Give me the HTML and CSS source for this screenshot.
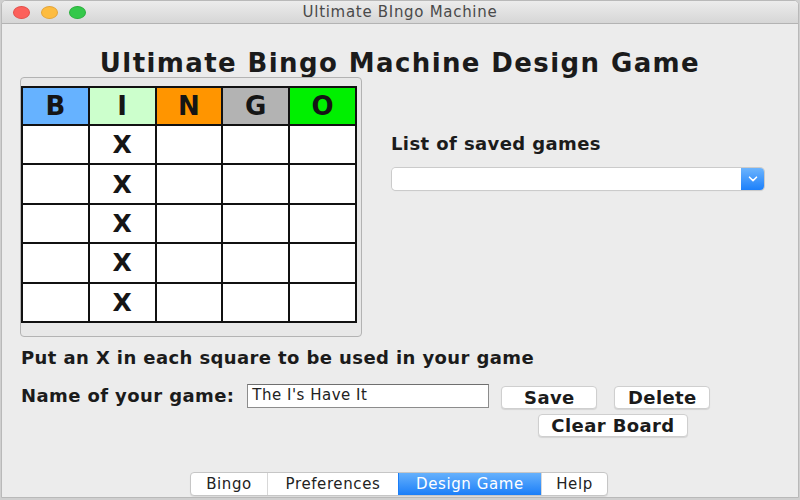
FILE: index.html
```html
<!DOCTYPE html>
<html>
<head>
<meta charset="utf-8">
<link rel="stylesheet" href="styles.css">
</head>
<body>
<div class="window">
  <div class="titlebar">
    <div class="lights">
      <span class="light red"></span>
      <span class="light yellow"></span>
      <span class="light green"></span>
    </div>
    <div class="title">Ultimate BIngo Machine</div>
  </div>
  <div class="content">
    <h1 class="heading">Ultimate Bingo Machine Design Game</h1>
    <div class="main">
      <div class="panel">
        <div class="board">
          <div class="hd b">B</div>
          <div class="hd i">I</div>
          <div class="hd n">N</div>
          <div class="hd g">G</div>
          <div class="hd o">O</div>
          <div class="cell"></div><div class="cell">X</div><div class="cell"></div><div class="cell"></div><div class="cell"></div>
          <div class="cell"></div><div class="cell">X</div><div class="cell"></div><div class="cell"></div><div class="cell"></div>
          <div class="cell"></div><div class="cell">X</div><div class="cell"></div><div class="cell"></div><div class="cell"></div>
          <div class="cell"></div><div class="cell">X</div><div class="cell"></div><div class="cell"></div><div class="cell"></div>
          <div class="cell"></div><div class="cell">X</div><div class="cell"></div><div class="cell"></div><div class="cell"></div>
        </div>
      </div>
      <div class="side">
        <div class="label">List of saved games</div>
        <div class="select">
          <div class="select-field"></div>
          <div class="select-btn">
            <svg width="10" height="6" viewBox="0 0 10 6"><path d="M1.5 1.2 L5 4.6 L8.5 1.2" fill="none" stroke="#fff" stroke-width="1.6" stroke-linecap="round" stroke-linejoin="round"/></svg>
          </div>
        </div>
      </div>
    </div>
    <div class="label instr">Put an X in each square to be used in your game</div>
    <div class="name-row">
      <div class="label">Name of your game:</div>
      <div class="field">The I's Have It</div>
      <div class="btn save">Save</div>
      <div class="btn delete">Delete</div>
    </div>
    <div class="clear-row">
      <div class="btn clear">Clear Board</div>
    </div>
    <div class="tabs-row">
      <div class="tabs">
        <div class="tab t-bingo">Bingo</div>
        <div class="tab t-pref">Preferences</div>
        <div class="tab t-design active">Design Game</div>
        <div class="tab t-help">Help</div>
      </div>
    </div>
  </div>
</div>
</body>
</html>
```
FILE: styles.css
```css
* { box-sizing: border-box; }
html, body {
  margin: 0;
  padding: 0;
  background: #cfcfcf;
  font-family: "DejaVu Sans", "Liberation Sans", sans-serif;
  color: #1a1a1a;
}
.window {
  width: 798px;
  height: 498px;
  margin-left: 1px;
  background: #ececec;
  border: 1px solid #b9b9b9;
  border-radius: 5px 5px 0 0;
  overflow: hidden;
}
.titlebar {
  height: 23px;
  background: linear-gradient(#ececec, #d6d6d6);
  border-bottom: 1px solid #b3b3b3;
  display: flex;
  align-items: center;
  position: relative;
}
.lights {
  display: flex;
  gap: 11px;
  padding-left: 11px;
}
.light {
  width: 17px;
  height: 13px;
  border-radius: 50%;
  display: block;
}
.red { background: #fc605b; border: 1px solid #e2504b; }
.yellow { background: #fdbc40; border: 1px solid #e3a53a; }
.green { background: #34c84a; border: 1px solid #2bb03d; }
.title {
  position: absolute;
  left: 0;
  right: 0;
  text-align: center;
  font-size: 15px;
  letter-spacing: 0.7px;
  color: #4a4a4a;
  pointer-events: none;
}
.heading {
  margin: 24px 0 0 0;
  font-size: 26px;
  line-height: 30px;
  letter-spacing: 1.4px;
  font-weight: bold;
  text-align: center;
  color: #1b1b1b;
}
.main {
  display: flex;
  margin-top: -1px;
  padding-left: 18px;
}
.panel {
  width: 342px;
  height: 260px;
  border: 1px solid #b3b3b3;
  border-radius: 4px;
  background: #e8e8e8;
  padding-top: 8px;
}
.board {
  width: 336px;
  display: grid;
  grid-template-columns: repeat(5, 1fr);
  grid-template-rows: 36px repeat(5, 37.4px);
  gap: 2px;
  padding: 2px;
  background: #111;
}
.hd {
  display: flex;
  align-items: center;
  justify-content: center;
  font-weight: bold;
  font-size: 26px;
  color: #151515;
}
.b { background: #66b2ff; }
.i { background: #ccffcc; }
.n { background: #ff9500; }
.g { background: #b3b3b3; }
.o { background: #00f000; }
.cell {
  background: #fff;
  display: flex;
  align-items: center;
  justify-content: center;
  font-weight: bold;
  font-size: 25px;
  color: #151515;
}
.side {
  margin-left: 29px;
  padding-top: 57px;
}
.label {
  font-size: 18px;
  line-height: 20px;
  letter-spacing: 0.4px;
  font-weight: bold;
  color: #1b1b1b;
  white-space: nowrap;
}
.select {
  margin-top: 14px;
  margin-left: 1px;
  width: 372px;
  height: 22px;
  display: flex;
  border-radius: 4px;
  box-shadow: 0 0 0 1px #cbcbcb, 0 1px 1px rgba(0,0,0,0.12);
  overflow: hidden;
}
.select-field {
  flex: 1;
  background: #fff;
}
.select-btn {
  width: 23px;
  background: linear-gradient(#6cb4fd, #1c80fb);
  display: flex;
  align-items: center;
  justify-content: center;
}
.instr {
  margin-top: 11px;
  padding-left: 19px;
}
.name-row {
  display: flex;
  align-items: center;
  margin-top: 16px;
  padding-left: 19px;
  height: 24px;
}
.field {
  margin-left: 13px;
  width: 242px;
  height: 24px;
  background: #fff;
  border: 1px solid #8c8c8c;
  border-top-color: #6f6f6f;
  font-size: 15px;
  letter-spacing: 0.5px;
  line-height: 21px;
  padding-left: 4px;
  color: #222;
  white-space: nowrap;
}
.btn {
  height: 23px;
  background: #fff;
  border: 1px solid #cfcfcf;
  border-radius: 4px;
  box-shadow: 0 1px 1px rgba(0,0,0,0.1);
  font-size: 18px;
  letter-spacing: 0.4px;
  font-weight: bold;
  line-height: 21px;
  text-align: center;
  color: #1b1b1b;
  white-space: nowrap;
}
.save {
  margin-left: 12px;
  margin-top: 2px;
  width: 96px;
}
.delete {
  margin-left: 17px;
  margin-top: 2px;
  width: 96px;
}
.clear-row {
  display: flex;
  margin-top: 6px;
  padding-left: 536px;
}
.clear {
  width: 150px;
}
.tabs-row {
  display: flex;
  justify-content: center;
  margin-top: 35px;
  padding-right: 2px;
}
.tabs {
  display: flex;
  height: 24px;
  border: 1px solid #c6c6c6;
  border-radius: 4px;
  background: #fff;
  box-shadow: 0 1px 1px rgba(0,0,0,0.08);
  overflow: hidden;
}
.tab {
  font-size: 15px;
  letter-spacing: 0.6px;
  line-height: 22px;
  text-align: center;
  color: #222;
  border-left: 1px solid #d8d8d8;
  white-space: nowrap;
}
.tab:first-child { border-left: none; }
.t-bingo { width: 76px; }
.t-pref { width: 131px; }
.t-design { width: 143px; }
.t-help { width: 66px; }
.active {
  background: linear-gradient(#66b1fc, #1b7ef8);
  color: #fff;
  border-left-color: #1b7ef8;
}
```
